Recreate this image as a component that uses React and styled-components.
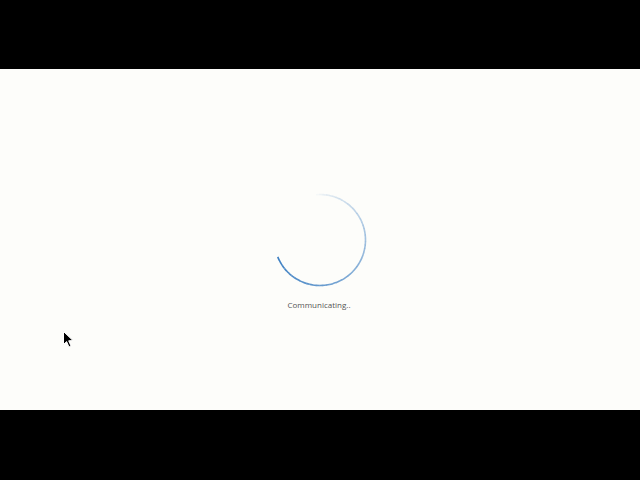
import styled, { createGlobalStyle } from 'styled-components';

const Global = createGlobalStyle`
  html, body { margin: 0; padding: 0; background: #000; }
  body { width: 640px; height: 480px; overflow: hidden; }
`;

const Screen = styled.div`
  position: relative;
  width: 640px;
  height: 480px;
  display: flex;
  flex-direction: column;
  background: #000;
`;

const Bar = styled.div`
  height: ${(p) => p.h}px;
  flex: none;
  background: #000;
`;

const Stage = styled.main`
  height: 341px;
  flex: none;
  background: #fdfdfa;
  display: flex;
  flex-direction: column;
  align-items: center;
  padding-top: 121px;
  box-sizing: border-box;
`;

const Status = styled.div`
  margin-top: 9px;
  font-family: "Open Sans", "Noto Sans", sans-serif;
  font-size: 8px;
  line-height: 12px;
  color: #555;
  margin-left: -2px;
`;

const Pointer = styled.svg`
  position: absolute;
  left: 63px;
  top: 331px;
`;

function Spinner() {
  const cx = 50, cy = 50, r = 45.5;
  const start = -95, end = 158, n = 60;
  const segs = [];
  for (let i = 0; i < n; i++) {
    const a = ((start + ((end - start) * i) / n) * Math.PI) / 180;
    const b = ((start + ((end - start) * (i + 1.05)) / n) * Math.PI) / 180;
    const t = i / (n - 1);
    segs.push(
      <path
        key={i}
        d={`M${cx + r * Math.cos(a)} ${cy + r * Math.sin(a)} A${r} ${r} 0 0 1 ${cx + r * Math.cos(b)} ${cy + r * Math.sin(b)}`}
        stroke="#3d7fc2"
        strokeOpacity={0.04 + 0.96 * Math.pow(t, 0.8)}
        strokeWidth="1.6"
        fill="none"
      />
    );
  }
  return (
    <svg width="100" height="100" viewBox="0 0 100 100">
      {segs}
    </svg>
  );
}

export default function App() {
  return (
    <Screen>
      <Global />
      <Bar h={69} />
      <Stage>
        <Spinner />
        <Status>Communicating..</Status>
      </Stage>
      <Bar h={70} />
      <Pointer width="12" height="18" viewBox="0 0 12 18">
        <path d="M0.5 0.5 L0.5 13.5 L3.6 10.6 L6 16 L8 15 L5.7 9.8 L10 9.6 Z" fill="#000" stroke="#fff" strokeWidth="1" />
      </Pointer>
    </Screen>
  );
}
